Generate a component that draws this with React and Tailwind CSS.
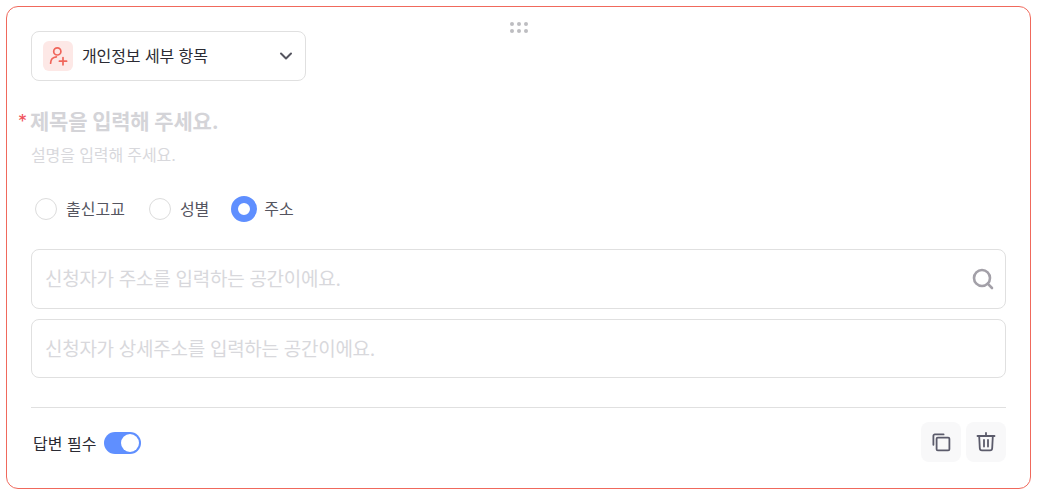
import React from 'react'
import { ChevronDown, Search } from 'lucide-react'

const font = "font-['Inter','Noto_Sans_CJK_KR',sans-serif]"

const UserPlusIcon = () => (
  <svg width="20" height="20" viewBox="0 0 20 20" fill="none" stroke="#f0655a" strokeWidth="1.7" strokeLinecap="round">
    <circle cx="9.3" cy="5.4" r="3.6" />
    <path d="M2.6 17.2c0-3.7 2.4-6.2 5.8-6.4" />
    <path d="M11.4 15.2h7.2M15 11.6v7.2" />
  </svg>
)

const CopyIcon = () => (
  <svg width="20" height="20" viewBox="0 0 20 20" fill="none" stroke="#5b5b6b" strokeWidth="1.8">
    <rect x="5.6" y="5.6" width="12.8" height="12.8" rx="1.2" />
    <path d="M12.6 2.4H3.8a1.4 1.4 0 0 0-1.4 1.4v9" strokeLinecap="round" />
  </svg>
)

const TrashIcon = () => (
  <svg width="20" height="20" viewBox="0 0 20 20" fill="none" stroke="#5b5b6b" strokeWidth="1.8" strokeLinecap="round">
    <path d="M1.5 4h17" />
    <path d="M10 1v3" />
    <path d="M3.2 4.5l.6 11.7a2.2 2.2 0 0 0 2.2 2.1h8a2.2 2.2 0 0 0 2.2-2.1l.6-11.7" />
    <path d="M8 8v6.6M12 8v6.6" />
  </svg>
)

const Radio = ({ label, checked }) => (
  <label className={`flex items-center ${checked ? 'gap-[7px]' : 'gap-[9px]'}`}>
    {checked ? (
      <span className="size-[26px] rounded-full border-[7px] border-[#5f8fff] bg-white" />
    ) : (
      <span className="size-[22px] rounded-full border border-[#dcdcdc] bg-white" />
    )}
    <span className="text-[16px] text-[#55555f]">{label}</span>
  </label>
)

export default function App() {
  return (
    <div className={`${font} bg-white w-[1037px] h-[496px] p-[6px] overflow-hidden`}>
      <div className="relative w-[1025px] h-[483px] border border-[#f0695c] rounded-xl bg-white px-6 pt-6">
        {/* drag handle */}
        <div className="absolute top-[15px] left-[503px] grid grid-cols-3 gap-[3px]">
          {[0, 1, 2, 3, 4, 5].map((i) => (
            <span key={i} className="size-[4px] rounded-full bg-[#bdbdc1]" />
          ))}
        </div>

        {/* type select */}
        <div className="flex items-center w-[275px] h-[50px] border border-[#e0e0e0] rounded-lg pl-[11px] pr-[14px]">
          <div className="flex items-center justify-center size-[30px] rounded-md bg-[#fde8e6]">
            <UserPlusIcon />
          </div>
          <span className="ml-[9px] text-[16px] tracking-[-0.1px] text-[#2b2b33]">개인정보 세부 항목</span>
          <ChevronDown className="ml-auto size-[20px] -mr-[5px] text-[#55555f]" strokeWidth={2.4} />
        </div>

        {/* title */}
        <div className="relative mt-[26px] -ml-[1px]">
          <span className="absolute left-[-12px] top-0 text-[18px] leading-[30px] text-[#f0515a]">*</span>
          <h2 className="text-[21px] leading-[30px] font-bold tracking-[-0.2px] text-[#d4d4d8]">제목을 입력해 주세요.</h2>
        </div>
        <p className="mt-[6px] text-[16px] leading-[24px] tracking-[-0.12px] text-[#d8d8dc]">설명을 입력해 주세요.</p>

        {/* options */}
        <div className="flex items-center h-[26px] mt-[29px] pl-[4px] gap-[24px]">
          <Radio label="출신고교" />
          <Radio label="성별" />
          <div className="-ml-[2px]"><Radio label="주소" checked /></div>
        </div>

        {/* address inputs */}
        <div className="flex items-center justify-between mt-[27px] h-[60px] border border-[#e0e0e0] rounded-lg pl-[13px] pr-[10px]">
          <span className="pt-[2px] text-[19px] tracking-[-0.28px] text-[#d8d8dc]">신청자가 주소를 입력하는 공간이에요.</span>
          <Search className="size-[24px] text-[#a3a0a8]" strokeWidth={2.6} />
        </div>
        <div className="flex items-center mt-[10px] h-[59px] border border-[#e0e0e0] rounded-lg pl-[13px]">
          <span className="pt-[4px] text-[19px] tracking-[-0.28px] text-[#d8d8dc]">신청자가 상세주소를 입력하는 공간이에요.</span>
        </div>

        <div className="mt-[29px] h-px bg-[#e0e0e0]" />

        {/* footer */}
        <div className="flex items-center justify-between mt-[14px]">
          <div className="flex items-center gap-[8px] pl-[2px] pt-[2px]">
            <span className="pt-[2px] text-[16px] text-[#2b2b33]">답변 필수</span>
            <div className="flex items-center justify-end w-[37px] h-[22px] rounded-full bg-[#5f8fff] pr-[2px]">
              <span className="size-[18px] rounded-full bg-white" />
            </div>
          </div>
          <div className="flex gap-[5px]">
            <button className="flex items-center justify-center size-[40px] rounded-lg bg-[#f8f8f9]"><CopyIcon /></button>
            <button className="flex items-center justify-center size-[40px] rounded-lg bg-[#f8f8f9]"><TrashIcon /></button>
          </div>
        </div>
      </div>
    </div>
  )
}
